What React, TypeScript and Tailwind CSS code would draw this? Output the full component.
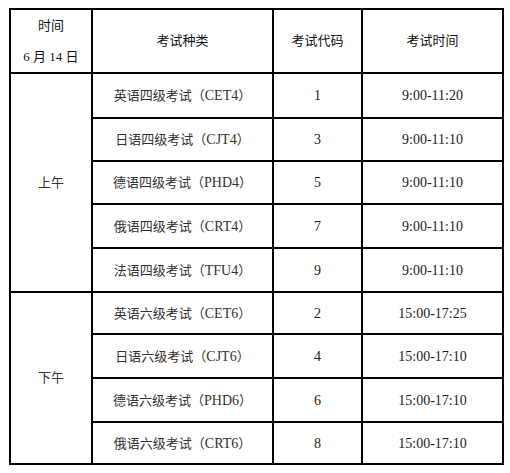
import React from 'react';

type Exam = { name: string; code: string; time: string; h: string };

const morning: Exam[] = [
  { name: '英语四级考试', code: 'CET4', time: '9:00-11:20', h: 'h-[45px]' },
  { name: '日语四级考试', code: 'CJT4', time: '9:00-11:10', h: 'h-[43px]' },
  { name: '德语四级考试', code: 'PHD4', time: '9:00-11:10', h: 'h-[43px]' },
  { name: '俄语四级考试', code: 'CRT4', time: '9:00-11:10', h: 'h-[44px]' },
  { name: '法语四级考试', code: 'TFU4', time: '9:00-11:10', h: 'h-[44px]' },
];

const afternoon: Exam[] = [
  { name: '英语六级考试', code: 'CET6', time: '15:00-17:25', h: 'h-[42px]' },
  { name: '日语六级考试', code: 'CJT6', time: '15:00-17:10', h: 'h-[44px]' },
  { name: '德语六级考试', code: 'PHD6', time: '15:00-17:10', h: 'h-[44px]' },
  { name: '俄语六级考试', code: 'CRT6', time: '15:00-17:10', h: 'h-[42px]' },
];

const codes = ['1', '3', '5', '7', '9', '2', '4', '6', '8'];

const cjk = "font-['Liberation_Serif','Noto_Sans_CJK_SC',serif]";
const cell = 'border-2 border-black text-center align-middle';

const ExamRows: React.FC<{ label: string; rows: Exam[]; offset: number }> = ({ label, rows, offset }) => (
  <>
    {rows.map((r, i) => (
      <tr key={r.code} className={r.h}>
        {i === 0 && (
          <td rowSpan={rows.length} className={`${cell} text-[#333]`}>
            {label}
          </td>
        )}
        <td className={`${cell} text-[#333] [text-spacing-trim:space-all]`}>
          {r.name}（<span className="text-[14px]">{r.code}</span>）
        </td>
        <td className={`${cell} text-[14px] text-[#222]`}>{codes[offset + i]}</td>
        <td className={`${cell} text-[14px] text-[#222]`}>{r.time}</td>
      </tr>
    ))}
  </>
);

const App: React.FC = () => {
  return (
    <div className={`w-[510px] h-[473px] bg-white pl-[9px] pt-[8px] ${cjk} text-[13px]`}>
      <table className="w-[493px] border-collapse table-fixed">
        <colgroup>
          <col className="w-[82px]" />
          <col className="w-[181px]" />
          <col className="w-[89px]" />
          <col className="w-[141px]" />
        </colgroup>
        <thead>
          <tr className="h-[64px]">
            <th className={`${cell} font-normal text-[#111]`}>
              <div className="flex flex-col items-center gap-[12px]">
                <span>时间</span>
                <span>6 月 14 日</span>
              </div>
            </th>
            <th className={`${cell} font-normal text-[#111]`}>考试种类</th>
            <th className={`${cell} font-normal text-[#111]`}>考试代码</th>
            <th className={`${cell} font-normal text-[#111]`}>考试时间</th>
          </tr>
        </thead>
        <tbody>
          <ExamRows label="上午" rows={morning} offset={0} />
          <ExamRows label="下午" rows={afternoon} offset={5} />
        </tbody>
      </table>
    </div>
  );
};

export default App;
